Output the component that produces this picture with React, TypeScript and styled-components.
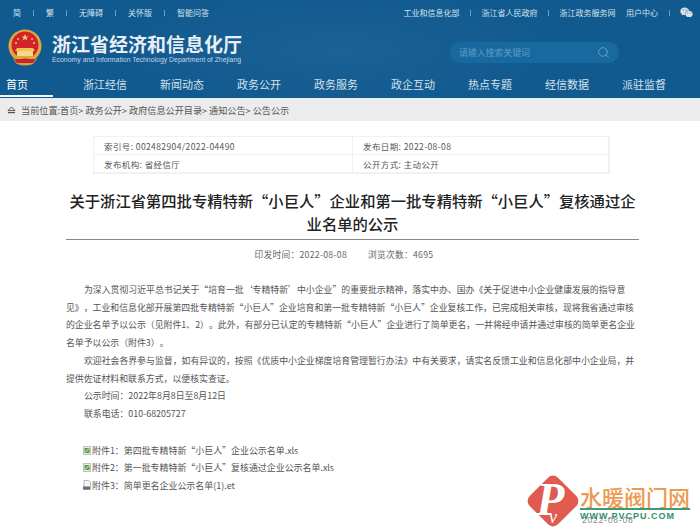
import { createGlobalStyle, styled } from 'styled-components';
import { Search } from 'lucide-react';
import { FaWeixin } from 'react-icons/fa';

const cjk = `"Noto Sans CJK SC", "Liberation Sans", sans-serif`;

const GlobalStyle = createGlobalStyle`
  html, body { margin: 0; padding: 0; background: #fff; }
  body { width: 700px; height: 531px; overflow: hidden; font-family: ${cjk}; text-spacing-trim: space-all; }
  * { box-sizing: border-box; }
`;

const navItems = ['首页', '浙江经信', '新闻动态', '政务公开', '政务服务', '政企互动', '热点专题', '经信数据', '派驻监督'];
const crumbs = ['当前位置:首页', '政务公开', '政府信息公开目录', '通知公告', '公告公示'];

function Emblem() {
  return (
    <svg width="36" height="38" viewBox="0 0 36 38">
      <path d="M6 30 L10 35 Q18 38 26 35 L30 30 Z" fill="#d8a03c" />
      <circle cx="18" cy="17" r="16.5" fill="#e0a93e" />
      <circle cx="18" cy="16" r="13.5" fill="#d2232a" />
      <path d="M18 5l1 2.4 2.5.1-2 1.5.8 2.4-2.3-1.4-2.3 1.4.8-2.4-2-1.5 2.5-.1z" fill="#f4cf5a" />
      <circle cx="11" cy="10" r="1" fill="#f4cf5a" />
      <circle cx="25" cy="10" r="1" fill="#f4cf5a" />
      <circle cx="9" cy="14" r="1" fill="#f4cf5a" />
      <circle cx="27" cy="14" r="1" fill="#f4cf5a" />
      <path d="M10 19h16l2 3H8z" fill="#f0c350" />
      <rect x="10" y="22" width="16" height="5" fill="#f4d98a" />
      <rect x="7" y="27" width="22" height="2" fill="#e0a93e" />
      <path d="M7 30h22l-3 4H10z" fill="#c9242b" />
    </svg>
  );
}

function ExcelIcon() {
  return (
    <svg width="8" height="9" viewBox="0 0 8 9">
      <rect x="0.5" y="0.5" width="7" height="8" fill="#e8efe6" stroke="#b9c4b6" />
      <rect x="1.5" y="2" width="5" height="5" fill="#5c9a56" />
      <path d="M2 6.5 L6 2.5" stroke="#e8f2e4" strokeWidth="1" />
    </svg>
  );
}

function EtIcon() {
  return (
    <svg width="8" height="10" viewBox="0 0 8 10">
      <path d="M1 .5h4.5L7.5 2.5v7H1z" fill="#f4f4f4" stroke="#b5b5b5" />
      <rect x="0" y="6.5" width="7" height="3" fill="#6d6d6d" />
    </svg>
  );
}

function HomeIcon() {
  return (
    <svg width="9" height="8" viewBox="0 0 9 8">
      <path d="M4.5 1 L8 4.6 H1 Z" fill="none" stroke="#555" strokeWidth="1" />
      <rect x="1" y="6" width="7" height="1.2" fill="#555" />
    </svg>
  );
}

function App() {
  return (
    <Page>
      <GlobalStyle />
      <Header>
        <TopBar>
          <TopGroup $gap={12}>
            <TopLink>简</TopLink>
            <TopSep />
            <TopLink>繁</TopLink>
            <TopSep />
            <TopLink>无障碍</TopLink>
            <TopSep />
            <TopLink>关怀版</TopLink>
            <TopSep />
            <TopLink>智能问答</TopLink>
          </TopGroup>
          <TopGroup $gap={10.5}>
            <TopLink>工业和信息化部</TopLink>
            <TopSep />
            <TopLink>浙江省人民政府</TopLink>
            <TopSep />
            <TopLink>浙江政务服务网</TopLink>
            <TopLink>用户中心</TopLink>
            <TopSep />
            <WechatIcon><FaWeixin size={13} /></WechatIcon>
          </TopGroup>
        </TopBar>
        <Brand>
          <BrandLeft>
            <Emblem />
            <BrandText>
              <BrandTitle>浙江省经济和信息化厅</BrandTitle>
              <BrandSub>Economy and Information Technology Department of Zhejiang</BrandSub>
            </BrandText>
          </BrandLeft>
          <SearchBox>
            <SearchHint>请输入搜索关键词</SearchHint>
            <Search size={13} color="#6fa9cf" strokeWidth={1.5} />
          </SearchBox>
        </Brand>
        <Nav>
          {navItems.map((item, i) => (
            <NavItem key={item} $active={i === 0}>{item}</NavItem>
          ))}
        </Nav>
      </Header>
      <Crumbs>
        <HomeIcon />
        <CrumbText>{crumbs.join('> ')}</CrumbText>
      </Crumbs>
      <Main>
        <MetaTable>
          <MetaCell>索引号: 002482904/2022-04490</MetaCell>
          <MetaCell>发布日期: 2022-08-08</MetaCell>
          <MetaCell>发布机构: 省经信厅</MetaCell>
          <MetaCell>公开方式: 主动公开</MetaCell>
        </MetaTable>
        <Title>关于浙江省第四批专精特新“小巨人”企业和第一批专精特新“小巨人”复核通过企业名单的公示</Title>
        <Info>
          <span>印发时间：2022-08-08</span>
          <span>浏览次数：4695</span>
        </Info>
        <Article>
          <Para>为深入贯彻习近平总书记关于“培育一批‘专精特新’中小企业”的重要批示精神，落实中办、国办《关于促进中小企业健康发展的指导意见》，工业和信息化部开展第四批专精特新“小巨人”企业培育和第一批专精特新“小巨人”企业复核工作，已完成相关审核，现将我省通过审核的企业名单予以公示（见附件1、2）。此外，有部分已认定的专精特新“小巨人”企业进行了简单更名，一并将经申请并通过审核的简单更名企业名单予以公示（附件3）。</Para>
          <Para>欢迎社会各界参与监督，如有异议的，按照《优质中小企业梯度培育管理暂行办法》中有关要求，请实名反馈工业和信息化部中小企业局，并提供佐证材料和联系方式，以便核实查证。</Para>
          <Para>公示时间：2022年8月8日至8月12日</Para>
          <Para>联系电话：010-68205727</Para>
        </Article>
        <Attachments>
          <Attachment><ExcelIcon />附件1：第四批专精特新“小巨人”企业公示名单.xls</Attachment>
          <Attachment><ExcelIcon />附件2：第一批专精特新“小巨人”复核通过企业公示名单.xls</Attachment>
          <Attachment><EtIcon />附件3：简单更名企业公示名单(1).et</Attachment>
        </Attachments>
      </Main>
      <Watermark>
        <FaintDate>2022-08-08</FaintDate>
        <LogoMark>
          <LogoP>P</LogoP>
          <LogoV>v</LogoV>
        </LogoMark>
        <WaterText>
          <WaterName>水暖阀门网</WaterName>
          <WaterLine />
          <WaterUrl>WWW.PVCPU.COM</WaterUrl>
        </WaterText>
      </Watermark>
    </Page>
  );
}

export default App;

const Page = styled.div`
  position: relative;
  width: 700px;
  height: 531px;
  overflow: hidden;
  background: #fff;
`;

const Header = styled.div`
  height: 98px;
  background:
    radial-gradient(ellipse 220px 60px at 340px 50px, rgba(70, 130, 175, 0.18), transparent),
    #115a8f;
`;

const TopBar = styled.div`
  height: 25px;
  padding: 0 7px 0 13px;
  display: flex;
  align-items: center;
  justify-content: space-between;
`;

const TopGroup = styled.div<{ $gap: number }>`
  display: flex;
  align-items: center;
  gap: ${(p) => p.$gap}px;
`;

const TopLink = styled.span`
  font-size: 8px;
  color: #d5e2ec;
`;

const TopSep = styled.i`
  width: 1px;
  height: 6px;
  background: #6f9dbf;
`;

const WechatIcon = styled.span`
  display: flex;
  color: #d9e2e8;
`;

const Brand = styled.div`
  height: 44px;
  padding: 4px 0 0 7px;
  display: flex;
  align-items: flex-start;
  justify-content: space-between;
`;

const BrandLeft = styled.div`
  display: flex;
  align-items: flex-start;
  gap: 9px;
`;

const BrandText = styled.div`
  display: flex;
  flex-direction: column;
  margin-top: 3px;
`;

const BrandTitle = styled.div`
  font-size: 19px;
  line-height: 24px;
  font-weight: 700;
  color: #e8eff4;
  white-space: nowrap;
`;

const BrandSub = styled.div`
  margin-top: -1px;
  font-family: "Liberation Sans", sans-serif;
  font-size: 6.9px;
  line-height: 9px;
  color: #c4d6e3;
  white-space: nowrap;
`;

const SearchBox = styled.div`
  width: 169px;
  height: 21px;
  margin: 13px 81px 0 0;
  padding: 0 9px;
  border-radius: 11px;
  background: #17699f;
  display: flex;
  align-items: center;
  justify-content: space-between;
`;

const SearchHint = styled.span`
  font-size: 8.9px;
  color: #5d9cc6;
`;

const Nav = styled.div`
  display: flex;
  height: 28px;
`;

const NavItem = styled.div<{ $active?: boolean }>`
  width: 77px;
  height: 28px;
  padding-left: 6px;
  font-size: 11px;
  line-height: 31px;
  color: #d5e2ec;
  white-space: nowrap;
  ${(p) => p.$active && `
    width: 53px;
    margin-right: 24px;
    border-bottom: 2px solid #f2f6f9;
    color: #fff;
  `}
`;

const Crumbs = styled.div`
  height: 23px;
  padding-left: 7px;
  background: #ececec;
  display: flex;
  align-items: center;
  gap: 5px;
`;

const CrumbText = styled.span`
  font-size: 9.15px;
  color: #555;
`;

const Main = styled.div`
  width: 576px;
  margin-left: 66px;
`;

const MetaTable = styled.div`
  width: 517px;
  margin: 15px 0 0 27px;
  display: grid;
  grid-template-columns: 259px 1fr;
  border: 1px solid #f1f1f1;
`;

const MetaCell = styled.div`
  height: 18px;
  padding-left: 10px;
  font-size: 8.5px;
  letter-spacing: 0.4px;
  line-height: 18px;
  color: #555;
  border-right: 1px solid #f1f1f1;
  border-bottom: 1px solid #f1f1f1;
`;

const Title = styled.h1`
  width: 573px;
  margin: 15px 0 0;
  padding-bottom: 5px;
  border-bottom: 1px solid #888;
  font-size: 15.3px;
  line-height: 22.5px;
  font-weight: 500;
  color: #222;
  text-align: center;
`;

const Info = styled.div`
  margin-top: 8px;
  padding-right: 20px;
  display: flex;
  justify-content: center;
  gap: 21px;
  font-size: 8.7px;
  letter-spacing: 0.3px;
  line-height: 13px;
  color: #666;
`;

const Article = styled.div`
  margin-top: 20px;
`;

const Para = styled.p`
  margin: 0;
  text-indent: 18px;
  font-size: 8.9px;
  line-height: 17.7px;
  color: #555;
`;

const Attachments = styled.div`
  margin-top: 19px;
  padding-left: 17px;
`;

const Attachment = styled.div`
  display: flex;
  align-items: center;
  gap: 1px;
  font-size: 8.95px;
  line-height: 17.5px;
  color: #555;
`;

const Watermark = styled.div`
  position: absolute;
  left: 525px;
  top: 472px;
  width: 175px;
  height: 59px;
  display: flex;
  align-items: center;
`;

const LogoMark = styled.div`
  position: relative;
  flex: none;
  width: 40px;
  height: 40px;
  margin: 0 7px 2px 8px;
  border-radius: 7px;
  background: #e05a50;
  transform: rotate(45deg);
`;

const LogoP = styled.span`
  position: absolute;
  left: 3px;
  top: 1px;
  transform: rotate(-45deg);
  font-family: "Liberation Serif", serif;
  font-style: italic;
  font-weight: 700;
  font-size: 46px;
  line-height: 40px;
  color: #fff;
`;

const LogoV = styled.span`
  position: absolute;
  left: 27px;
  top: 22px;
  transform: rotate(-45deg);
  font-family: "Liberation Serif", serif;
  font-style: italic;
  font-size: 18px;
  line-height: 18px;
  color: #fff;
`;

const WaterText = styled.div`
  position: relative;
  display: flex;
  flex-direction: column;
  width: 110px;
  margin-top: 3px;
`;

const WaterName = styled.div`
  font-size: 22px;
  line-height: 22px;
  font-weight: 500;
  color: #ec9a52;
  white-space: nowrap;
`;

const WaterLine = styled.div`
  height: 2px;
  margin-top: 1px;
  background: #3f9a72;
`;

const WaterUrl = styled.div`
  font-family: "Liberation Sans", sans-serif;
  font-size: 9px;
  line-height: 12px;
  font-weight: 700;
  letter-spacing: 1px;
  color: #2f8f68;
  white-space: nowrap;
`;

const FaintDate = styled.span`
  position: absolute;
  left: 57px;
  top: 43px;
  font-family: "Liberation Sans", sans-serif;
  font-size: 8.5px;
  letter-spacing: 0.8px;
  color: #8a8a8a;
`;
